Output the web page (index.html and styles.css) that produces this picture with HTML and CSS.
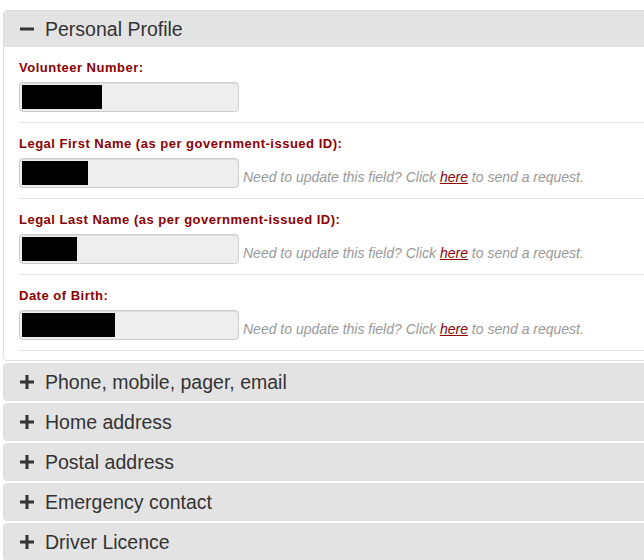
FILE: index.html
```html
<!DOCTYPE html>
<html lang="en">
<head>
    <meta charset="UTF-8">
    <meta name="viewport" content="width=device-width, initial-scale=1.0">
    <title>My Profile</title>
    <link rel="stylesheet" href="styles.css">
</head>
<body>
    <div class="accordion">
        <div class="panel open">
            <div class="panel-heading">
                <svg class="toggle" width="16" height="16" viewBox="0 0 16 16"><rect x="1" y="6.5" width="14" height="3" fill="#333"/></svg>
                <span>Personal Profile</span>
            </div>
            <div class="panel-body">
                <div class="field">
                    <label>Volunteer Number:</label>
                    <div class="field-row">
                        <div class="input"><span class="redact" style="width: 80px"></span></div>
                    </div>
                </div>
                <div class="field">
                    <label>Legal First Name (as per government-issued ID):</label>
                    <div class="field-row">
                        <div class="input"><span class="redact" style="width: 66px"></span></div>
                        <span class="hint">Need to update this field? Click <a href="#">here</a> to send a request.</span>
                    </div>
                </div>
                <div class="field">
                    <label>Legal Last Name (as per government-issued ID):</label>
                    <div class="field-row">
                        <div class="input"><span class="redact" style="width: 55px"></span></div>
                        <span class="hint">Need to update this field? Click <a href="#">here</a> to send a request.</span>
                    </div>
                </div>
                <div class="field">
                    <label>Date of Birth:</label>
                    <div class="field-row">
                        <div class="input"><span class="redact" style="width: 93px"></span></div>
                        <span class="hint">Need to update this field? Click <a href="#">here</a> to send a request.</span>
                    </div>
                </div>
            </div>
        </div>

        <div class="panel">
            <div class="panel-heading">
                <svg class="toggle" width="16" height="16" viewBox="0 0 16 16"><path d="M6.5 1h3v5.5H15v3H9.5V15h-3V9.5H1v-3h5.5z" fill="#333"/></svg>
                <span>Phone, mobile, pager, email</span>
            </div>
        </div>
        <div class="panel">
            <div class="panel-heading">
                <svg class="toggle" width="16" height="16" viewBox="0 0 16 16"><path d="M6.5 1h3v5.5H15v3H9.5V15h-3V9.5H1v-3h5.5z" fill="#333"/></svg>
                <span>Home address</span>
            </div>
        </div>
        <div class="panel">
            <div class="panel-heading">
                <svg class="toggle" width="16" height="16" viewBox="0 0 16 16"><path d="M6.5 1h3v5.5H15v3H9.5V15h-3V9.5H1v-3h5.5z" fill="#333"/></svg>
                <span>Postal address</span>
            </div>
        </div>
        <div class="panel">
            <div class="panel-heading">
                <svg class="toggle" width="16" height="16" viewBox="0 0 16 16"><path d="M6.5 1h3v5.5H15v3H9.5V15h-3V9.5H1v-3h5.5z" fill="#333"/></svg>
                <span>Emergency contact</span>
            </div>
        </div>
        <div class="panel">
            <div class="panel-heading">
                <svg class="toggle" width="16" height="16" viewBox="0 0 16 16"><path d="M6.5 1h3v5.5H15v3H9.5V15h-3V9.5H1v-3h5.5z" fill="#333"/></svg>
                <span>Driver Licence</span>
            </div>
        </div>
    </div>
</body>
</html>
```

FILE: styles.css
```css
html, body {
    margin: 0;
    padding: 0;
    overflow: hidden;
}
body {
    font-family: "Liberation Sans", Arial, sans-serif;
    background-color: white;
    color: #333;
}
.accordion {
    width: 680px;
    padding: 10px 0 0 3px;
}
.panel {
    border: 1px solid #ddd;
    border-radius: 4px;
    margin-bottom: 2px;
    background: white;
}
.panel-heading {
    display: flex;
    align-items: center;
    height: 36px;
    padding-left: 15px;
    background-color: #e3e3e3;
    font-size: 19.5px;
    color: #333;
    border-radius: 3px 3px 0 0;
}
.panel:not(.open) .panel-heading {
    border-radius: 3px;
}
.toggle {
    margin-right: 10px;
}
.panel-body {
    padding: 0 0 9px 15px;
}
.field {
    padding: 12px 0 10px;
    border-bottom: 1px solid #e5e5e5;
}
label {
    display: block;
    font-size: 13px;
    font-weight: bold;
    letter-spacing: 0.5px;
    color: #8b0000;
    line-height: 17px;
    margin-bottom: 6px;
}
.field-row {
    display: flex;
    align-items: flex-end;
}
.input {
    box-sizing: border-box;
    width: 220px;
    height: 30px;
    padding: 2px;
    background-color: #eee;
    border: 1px solid #ccc;
    border-radius: 4px;
    box-shadow: inset 0 1px 1px rgba(0, 0, 0, 0.075);
}
.redact {
    display: block;
    height: 24px;
    background: black;
}
.hint {
    margin-left: 4px;
    padding-bottom: 3px;
    font-size: 14px;
    font-style: italic;
    color: #999;
}
.hint a {
    color: #8b0000;
    text-decoration: underline;
}
```
